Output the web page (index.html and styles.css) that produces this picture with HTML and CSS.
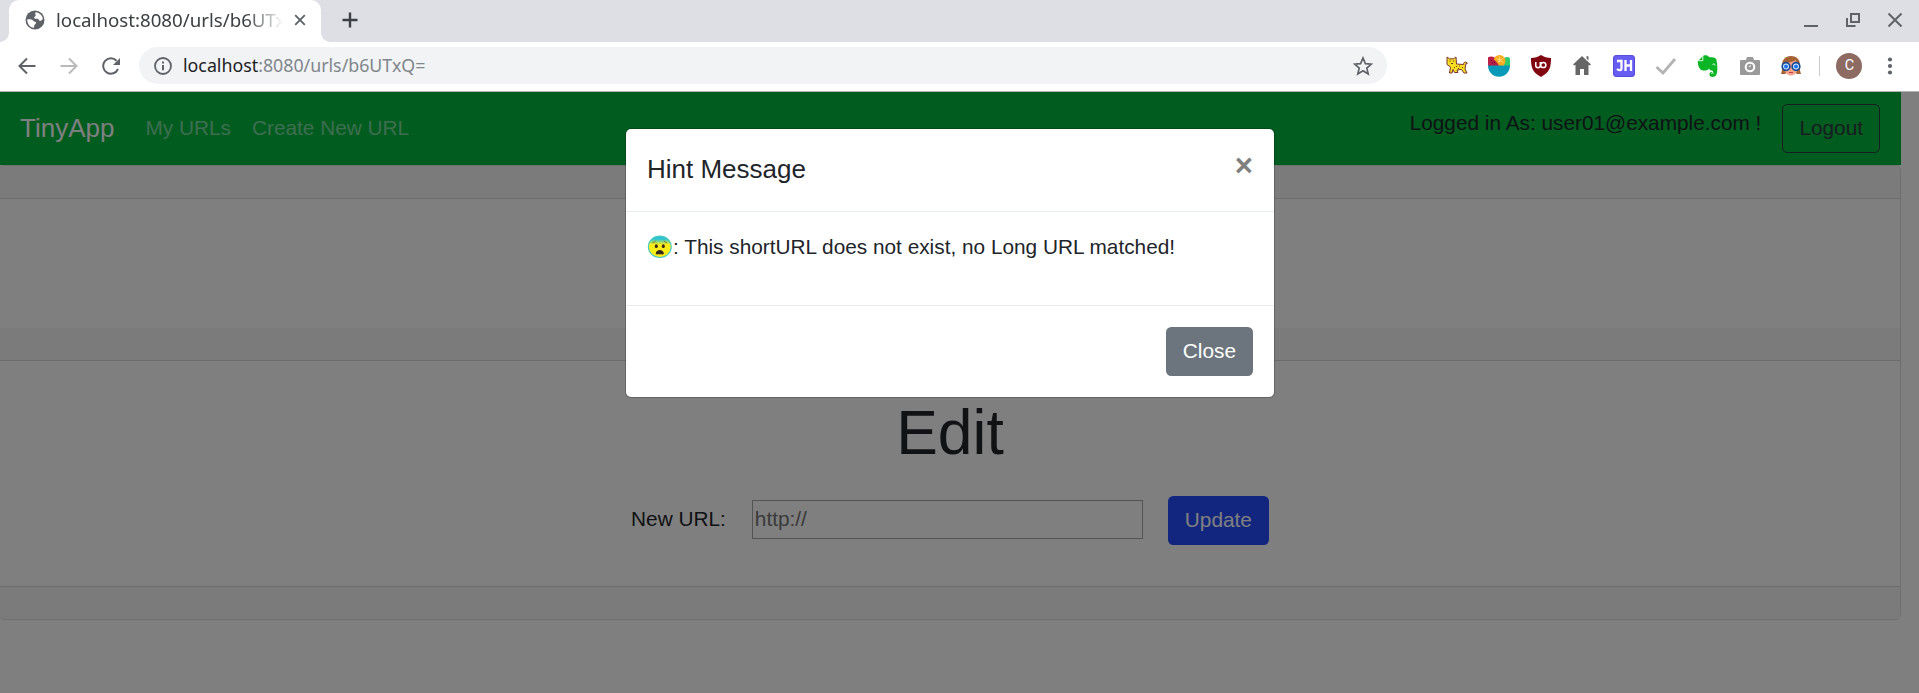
FILE: index.html
```html
<!DOCTYPE html>
<html lang="en">
<head>
<meta charset="utf-8">
<title>TinyApp</title>
<link rel="stylesheet" href="styles.css">
</head>
<body>
<div class="tabstrip">
  <div class="tab">
    <svg class="globe" width="20" height="20" viewBox="0 0 20 20"><circle cx="10" cy="10" r="9.5" fill="#5f6368"/><path d="M10.5 2.2C14 2.3 17.5 5 17.8 9c-1 .8-1.500 2.200-3 2-1-.2-.8-1.800-2-2.200-1.500-.3-3 .3-3.600-.8-.5-1.300 1.200-1.200 1.500-2.200.2-1.200-1-1.800-.2-3.600zM2.200 9.500c1.800-.3 4.800-.2 6 1.200.9 1.200 2.800.7 2.900 2.100 0 1.400-1.700 1.400-1.900 2.600-.1.900.2 1.600-.4 2.400C5 17.300 2.200 14 2.200 9.500z" fill="#fff"/></svg>
    <span class="tab-title">localhost:8080/urls/b6UTx</span>
    <svg class="tab-close" width="12" height="12" viewBox="0 0 12 12"><path d="M1.200 1.200l9.600 9.600M10.800 1.200L1.200 10.800" stroke="#5f6368" stroke-width="1.900"/></svg>
  </div>
  <svg class="newtab" width="16" height="16" viewBox="0 0 16 16"><path d="M8 .5v15M.5 8h15" stroke="#3c4043" stroke-width="2.400"/></svg>
  <div class="window-buttons">
    <svg width="16" height="16" viewBox="0 0 16 16"><path d="M1 14h14" stroke="#5f6368" stroke-width="2"/></svg>
    <svg width="16" height="16" viewBox="0 0 16 16"><path d="M6 2h8v8H6zM2 6v8h8.500" fill="none" stroke="#5f6368" stroke-width="2"/></svg>
    <svg width="16" height="16" viewBox="0 0 16 16"><path d="M1.500 1.500l13 13M14.500 1.500l-13 13" stroke="#5f6368" stroke-width="2"/></svg>
  </div>
</div>
<div class="toolbar">
  <div class="nav-icons">
    <svg width="18" height="18" viewBox="0 0 18 18"><path d="M17.500 9H2M9 1.500L1.500 9 9 16.500" fill="none" stroke="#5f6368" stroke-width="2"/></svg>
    <svg width="18" height="18" viewBox="0 0 18 18"><path d="M.5 9H16M9 1.500L16.500 9 9 16.500" fill="none" stroke="#bababd" stroke-width="2"/></svg>
    <svg width="20" height="18" viewBox="0 0 20 18"><path d="M16 12A7.700 7.700 0 1 1 14.500 3.700" fill="none" stroke="#5f6368" stroke-width="2"/><path d="M18 1v7h-7z" fill="#5f6368"/></svg>
  </div>
  <div class="omnibox">
    <svg width="18" height="18" viewBox="0 0 18 18"><circle cx="9" cy="9" r="8" fill="none" stroke="#5f6368" stroke-width="1.800"/><path d="M9 8v5.200M9 4.600v2" stroke="#5f6368" stroke-width="2"/></svg>
    <span class="url"><b>localhost</b>:8080/urls/b6UTxQ=</span>
    <svg class="star" width="20" height="20" viewBox="0 0 20 20"><path d="M10 2l2.400 5.600 6 .5-4.600 4 1.400 5.900-5.200-3.200L4.800 18l1.400-5.900-4.600-4 6-.5z" fill="none" stroke="#5f6368" stroke-width="1.700"/></svg>
  </div>
  <div class="extensions">
    <svg width="22" height="22" viewBox="0 0 22 22"><path d="M1 2l2.500 1.800h4L10 2l.5 7 7 .5c0-2 1-3 3.500-2v1.500c-2-.5-2 .5-1.500 2l-.5 3 2 4h-3l-2.500-3.500-4.500.5 1 2.500H8.500L7 14.500 6 18H3.500l1-6L1 9.500z" fill="#f5df20" stroke="#7c3338" stroke-width="1"/><path d="M3.500 6h1.200M7 6h1.200M5 8.500h2M10 11.500h1M13 11h1M16 12.500h1M8 12.500h1M12 13.500h1" stroke="#6f422c" stroke-width="1.200"/></svg>
    <svg width="22" height="22" viewBox="0 0 22 22"><path d="M0 2.500C3 .5 7 2 10 5l2 6H.3z" fill="#c21e4d"/><path d="M16 3c3-2 6-1 6 1v7h-6z" fill="#2ecc71"/><circle cx="11.500" cy="6" r="6" fill="#fba91a"/><path d="M0 2.500C4 2 9 6 11 11H.3z" fill="#b81f46"/><path d="M11.500 1.500V7M8.500 3.500l7 4M15.500 3L10 7" stroke="#ffe08a"/><path d="M0 10.500h22a11 11.300 0 0 1-22 0z" fill="#079ab8"/><path d="M3 5l1 1M6 7l1 1M4 8h1" stroke="#600d30"/></svg>
    <svg width="22" height="22" viewBox="0 0 22 22"><path d="M11 0c3 2 6 3 10 3 0 9-1 14-10 19C2 17 1 12 1 3c4 0 7-1 10-3z" fill="#800610"/><path d="M5.800 7v3.800c0 2.500 4.500 2.500 4.500 0V7" fill="none" stroke="#fff" stroke-width="1.500"/><circle cx="13.300" cy="10" r="2.600" fill="none" stroke="#fff" stroke-width="1.500"/></svg>
    <svg width="22" height="22" viewBox="0 0 22 22"><path d="M11 1l9 8.500-1.500 1-1-.8V20H13v-6H9v6H4.500V9.700l-1 .8L2 9.500zM15.500 1l2 .5v4l-2-2z" fill="#666"/></svg>
    <svg width="22" height="22" viewBox="0 0 22 22"><rect x=".5" y=".5" width="21" height="21" rx="2.500" fill="#685df3" stroke="#574dda"/><path d="M4 6h4.500v7.500c0 2-3 2-4.500.5M12.500 5v11M18 5v11M12.500 10.500H18" fill="none" stroke="#fff" stroke-width="2.300"/></svg>
    <svg width="22" height="22" viewBox="0 0 22 22"><path d="M1.500 12l6.500 6L20 4" fill="none" stroke="#b3b3b3" stroke-width="2.800"/></svg>
    <svg width="22" height="22" viewBox="0 0 22 22"><path d="M1 6l5-5c.5-1 5-1.500 6 1 2 .5 7-.5 7.500 3 1 5 1.500 12-.5 15.500-1.500 2-6 2-6.500-.5-.5-3 2.500-4 3.500-2v-2c-2-1-3.500-.5-4-2.500-.5 2-6 3-8.500 1C1 12 .5 8 1 6z" fill="#0bb526"/><path d="M1.500 5.700h4.300V1M15.500 9.500c1.300-1 2.500-.7 2.500 1M14.500 19c0-1.500 2-1.500 2-.5" fill="none" stroke="#fff" stroke-width=".9"/></svg>
    <svg width="22" height="22" viewBox="0 0 22 22"><path d="M2 5h5l1-3h6l1 3h5a1 1 0 0 1 1 1v13a1 1 0 0 1-1 1H2a1 1 0 0 1-1-1V6a1 1 0 0 1 1-1z" fill="#999"/><circle cx="11" cy="12" r="4.300" fill="#999" stroke="#fff" stroke-width="2"/><path d="M10 12a1.500 1.500 0 0 1 2-1" stroke="#fff" fill="none"/></svg>
    <svg width="22" height="22" viewBox="0 0 22 22"><path d="M2 10c0-5 3-9 9-9s9 4 9 9c-.5 3 0 6 1 9h-4l-6-4-6 4H1c1-3 1.500-6 1-9z" fill="#a56232"/><path d="M4 8c4 0 9-1 12-3l2 9c-1 4-4 6.500-7 6.500S5 18 4 14z" fill="#f3a48a"/><g fill="#d9eeff" stroke="#174995" stroke-width="1.700"><circle cx="6" cy="11.500" r="3.800"/><circle cx="16" cy="11.500" r="3.800"/></g><circle cx="6" cy="11.500" r="2" fill="#1e73ee"/><circle cx="16" cy="11.500" r="2" fill="#1e73ee"/><path d="M9 17.500h4" stroke="#c33e52"/></svg>
  </div>
  <span class="separator"></span>
  <span class="avatar">C</span>
  <svg class="more" width="6" height="18" viewBox="0 0 6 18" fill="#5f6368"><circle cx="3" cy="2.500" r="2.100"/><circle cx="3" cy="9" r="2.100"/><circle cx="3" cy="15.500" r="2.100"/></svg>
</div>
<div class="viewport">
  <div class="page">
    <nav class="navbar">
      <span class="brand">TinyApp</span>
      <span class="link">My URLs</span>
      <span class="link">Create New URL</span>
      <span class="user">Logged in As: user01@example.com !</span>
      <button class="btn btn-outline">Logout</button>
    </nav>
    <main class="card">
      <div class="band band-top"></div>
      <div class="blank"></div>
      <div class="band band-middle"></div>
      <section class="edit">
        <h1>Edit</h1>
        <form class="edit-form">
          <label for="url">New URL:</label>
          <input id="url" type="text" placeholder="http://">
          <button type="button" class="btn btn-primary">Update</button>
        </form>
      </section>
      <div class="band band-bottom"></div>
    </main>
  </div>
  <div class="backdrop">
    <div class="modal">
      <header class="modal-header"><h5>Hint Message</h5><span class="dismiss">×</span></header>
      <div class="modal-body">
        <svg width="26" height="24" viewBox="0 0 26 24"><defs><linearGradient id="face" x1="0" y1="0" x2="0" y2="1"><stop offset="0" stop-color="#18bfe8"/><stop offset=".15" stop-color="#35c4cc"/><stop offset=".4" stop-color="#ffed18"/><stop offset="1" stop-color="#ffed18"/></linearGradient></defs><ellipse cx="12.800" cy="11.800" rx="11.400" ry="10.700" fill="url(#face)" stroke="#4acbc0" stroke-width="1.200"/><ellipse cx="9.300" cy="11.200" rx="1.500" ry="1.900" fill="#33291d"/><ellipse cx="16.300" cy="11.200" rx="1.500" ry="1.900" fill="#33291d"/><path d="M8.800 18.600c0-4.800 8-4.800 8 0 0 1.400-2 .6-4 .6s-4 .8-4-.6z" fill="#33291d"/><path d="M5.500 7.800Q7.500 7.500 8.800 6M20 7.800Q18 7.500 16.800 6" fill="none" stroke="#8a7020" stroke-width=".9"/></svg><span>: This shortURL does not exist, no Long URL matched!</span>
      </div>
      <footer class="modal-footer"><button class="btn btn-secondary">Close</button></footer>
    </div>
  </div>
</div>
</body>
</html>
```
FILE: styles.css
```css
* { box-sizing: border-box; }
body { margin: 0; width: 1919px; height: 693px; overflow: hidden; background: #fff; font: 20.8px/31.2px "Liberation Sans", Arial, sans-serif; color: #212529; }
svg { display: block; flex: none; }
h1, h5 { margin: 0; font-weight: 400; }

.tabstrip { height: 42px; padding-left: 9px; background: #dddfe4; display: flex; align-items: center; }
.tab { position: relative; width: 312px; height: 42px; padding: 0 0 2px 16px; display: flex; align-items: center; background: #fff; border-radius: 10px 10px 0 0; }
.tab::before, .tab::after { content: ""; position: absolute; bottom: 0; width: 9px; height: 9px; }
.tab::before { left: -9px; background: radial-gradient(circle at 0 0, transparent 8.5px, #fff 9px); }
.tab::after { right: -9px; background: radial-gradient(circle at 100% 0, transparent 8.5px, #fff 9px); }
.tab-title { width: 227px; margin-left: 11px; overflow: hidden; white-space: nowrap; font: 18.7px/28px "Noto Sans", sans-serif; color: #3c4043; -webkit-mask-image: linear-gradient(90deg, #000 190px, transparent 227px); mask-image: linear-gradient(90deg, #000 190px, transparent 227px); }
.tab-close { margin-left: 11px; }
.newtab { margin: 0 0 2px 21px; }
.window-buttons { display: flex; gap: 26px; margin-left: auto; padding: 0 16px 2px 0; }

.toolbar { height: 50px; border-bottom: 1px solid #b4b4b6; padding-left: 18px; display: flex; align-items: center; padding-bottom: 2px; }
.nav-icons { display: flex; gap: 24px; width: 121px; }
.omnibox { width: 1248px; height: 37px; border-radius: 19px; background: #f1f3f4; display: flex; align-items: center; padding: 0 14px 0 15px; }
.url { margin: 0 0 1px 11px; font: 17.8px/28px "Noto Sans", sans-serif; color: #80868b; }
.url b { font-weight: 400; color: #202124; }
.star { margin-left: auto; }
.extensions { display: flex; gap: 19.8px; margin-left: 59px; }
.separator { width: 1px; height: 20px; background: #c8cacd; margin-left: 17px; }
.avatar { width: 26px; height: 26px; border-radius: 50%; margin-left: 16px; background: #8d6a62; color: #fff; text-align: center; font: 14.5px/26px Roboto, sans-serif; }
.more { margin-left: 25px; }

.viewport { position: relative; height: 601px; }
.page { width: 1901px; }
.navbar { height: 73px; padding: 0 21px 0 20px; background: #00b93f; display: flex; align-items: center; white-space: nowrap; }
.brand { font-size: 26px; color: #fff; margin-right: 31px; }
.link { color: rgba(255, 255, 255, .5); margin: 0 21px 2px 0; }
.user { margin: 0 21px 12px auto; }
.btn { height: 49px; padding: 0 16px 2px; border: 1px solid transparent; border-radius: 5.2px; font: 20.8px/31px "Liberation Sans", Arial, sans-serif; color: #fff; }
.btn-outline { background: transparent; border-color: #343a40; color: #343a40; }
.btn-primary { background: #264dff; }
.btn-secondary { background: #6c757d; }
.card { height: 455px; margin-left: -1px; border: 1px solid #dfdfdf; border-radius: 5px; overflow: hidden; display: flex; flex-direction: column; }
.band { background: #f7f7f7; flex: none; }
.band-top { height: 33px; border-bottom: 1px solid #d8d8d8; }
.blank { height: 129px; }
.band-middle { height: 33px; border-bottom: 1px solid #d8d8d8; }
.band-bottom { height: 33px; border-top: 1px solid #d8d8d8; }
.edit { height: 225px; padding-top: 34px; }
.edit h1 { font-size: 62.4px; line-height: 75px; text-align: center; }
.edit-form { display: flex; align-items: center; justify-content: center; margin-top: 26px; }
.edit-form label { padding-bottom: 3px; }
.edit-form input { width: 391px; height: 39px; margin: 0 25px 2px 26px; padding: 0 2px 1px; border: 1px solid #a9a9a9; border-radius: 0; background: #fff; font: inherit; }
.edit-form input::placeholder { color: #757575; }

.backdrop { position: absolute; inset: 0; background: rgba(0, 0, 0, .5); display: flex; justify-content: center; align-items: flex-start; padding: 37px 19px 0 0; }
.modal { width: 648px; height: 268px; border-radius: 5px; background: #fff; box-shadow: 0 0 0 1px rgba(0, 0, 0, .2); }
.modal-header { height: 83px; padding: 20px 21px; display: flex; justify-content: space-between; border-bottom: 1px solid #e9ecef; }
.modal-header h5 { font-size: 26px; line-height: 40px; }
.dismiss { padding-top: 1px; font-size: 31.2px; line-height: 31px; font-weight: 700; color: #808080; }
.modal-body { height: 93px; padding: 19px 21px; display: flex; align-items: flex-start; }
.modal-body svg { margin-top: 4px; }
.modal-footer { height: 92px; padding: 21px; border-top: 1px solid #e9ecef; display: flex; justify-content: flex-end; }
```
